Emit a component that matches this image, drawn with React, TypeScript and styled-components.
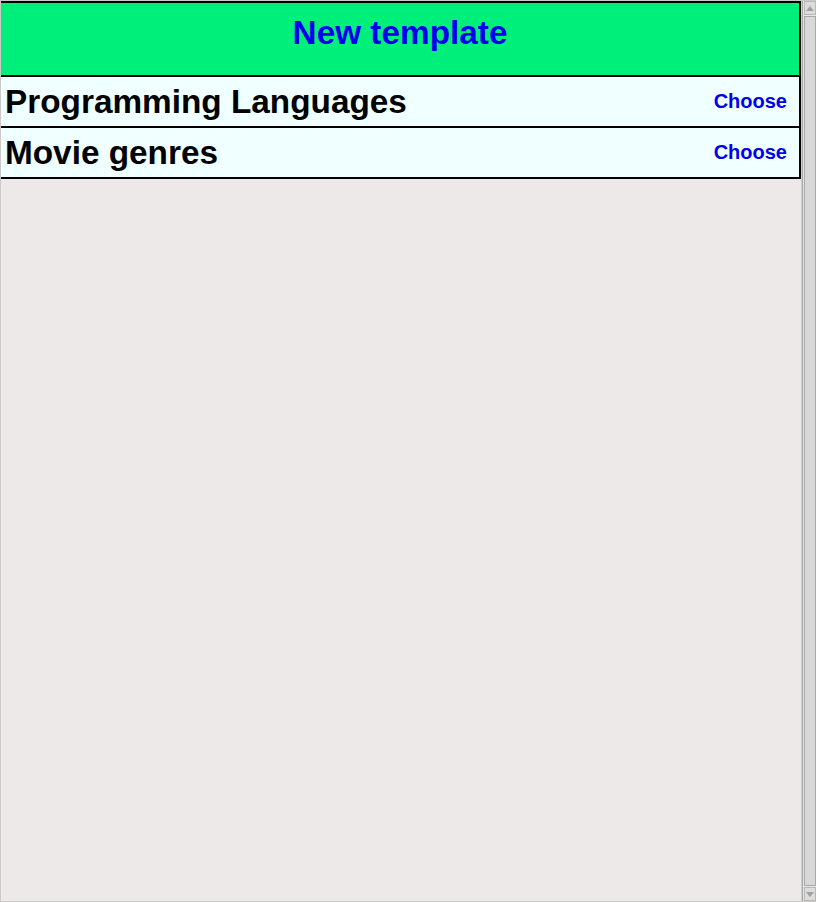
import React from "react";
import styled, { createGlobalStyle } from "styled-components";

const Global = createGlobalStyle`
  html, body {
    margin: 0;
    padding: 0;
    height: 100%;
    overflow: hidden;
  }
  body {
    background: #ede9e8;
    font-family: "Liberation Sans", Arial, sans-serif;
  }
`;

const Frame = styled.div`
  box-sizing: border-box;
  height: 902px;
  display: flex;
  border: 1px solid #cbc9c8;
  border-right: none;
  background: #ede9e8;
`;

const Content = styled.div`
  flex: 1;
  min-width: 0;
`;

const Panel = styled.div`
  border-top: 2px solid #000;
  border-right: 2px solid #000;
`;

const Header = styled.div`
  box-sizing: border-box;
  height: 74px;
  padding-top: 11px;
  background: #00ee7a;
  border-bottom: 2px solid #000;
  text-align: center;
`;

const Title = styled.h1`
  margin: 0;
  font-size: 33.33px;
  font-weight: bold;
  color: #0000ee;
  line-height: 37px;
`;

const Row = styled.div`
  box-sizing: border-box;
  height: 51px;
  display: flex;
  align-items: center;
  justify-content: space-between;
  padding: 0 12px 0 4px;
  background: #f0ffff;
  border-bottom: 2px solid #000;
`;

const Name = styled.span`
  font-size: 33.33px;
  font-weight: bold;
  color: #000;
`;

const ChooseButton = styled.button`
  border: none;
  background: none;
  padding: 0;
  font-family: "Liberation Sans", Arial, sans-serif;
  font-size: 20px;
  font-weight: bold;
  color: #0000ee;
  cursor: pointer;
`;

const ScrollBar = styled.div`
  box-sizing: border-box;
  width: 15px;
  display: flex;
  flex-direction: column;
  border-left: 1px solid #cfcfcf;
  background: #e6e6e6;
  padding-left: 1px;
  box-shadow: inset 1px 0 0 #a6a6a6;
`;

const ArrowButton = styled.div`
  box-sizing: border-box;
  height: 14px;
  display: flex;
  align-items: center;
  justify-content: center;
  background: #dcdcdc;
  border: 1px solid #b8b8b8;
  margin-left: 1px;
`;

const Thumb = styled.div`
  flex: 1;
  box-sizing: border-box;
  background: #d8d8d8;
  border: 1px solid #a8a8a8;
  margin: 1px 0 1px 1px;
`;

const Tri = ({ down }: { down?: boolean }) => (
  <svg width="8" height="5" viewBox="0 0 8 5">
    <path d={down ? "M0 0 H8 L4 5 Z" : "M0 5 H8 L4 0 Z"} fill="#a0a0a0" />
  </svg>
);

const templates = ["Programming Languages", "Movie genres"];

export default function App() {
  return (
    <>
      <Global />
      <Frame>
        <Content>
          <Panel>
            <Header>
              <Title>New template</Title>
            </Header>
            {templates.map((t) => (
              <Row key={t}>
                <Name>{t}</Name>
                <ChooseButton>Choose</ChooseButton>
              </Row>
            ))}
          </Panel>
        </Content>
        <ScrollBar>
          <ArrowButton>
            <Tri />
          </ArrowButton>
          <Thumb />
          <ArrowButton>
            <Tri down />
          </ArrowButton>
        </ScrollBar>
      </Frame>
    </>
  );
}
